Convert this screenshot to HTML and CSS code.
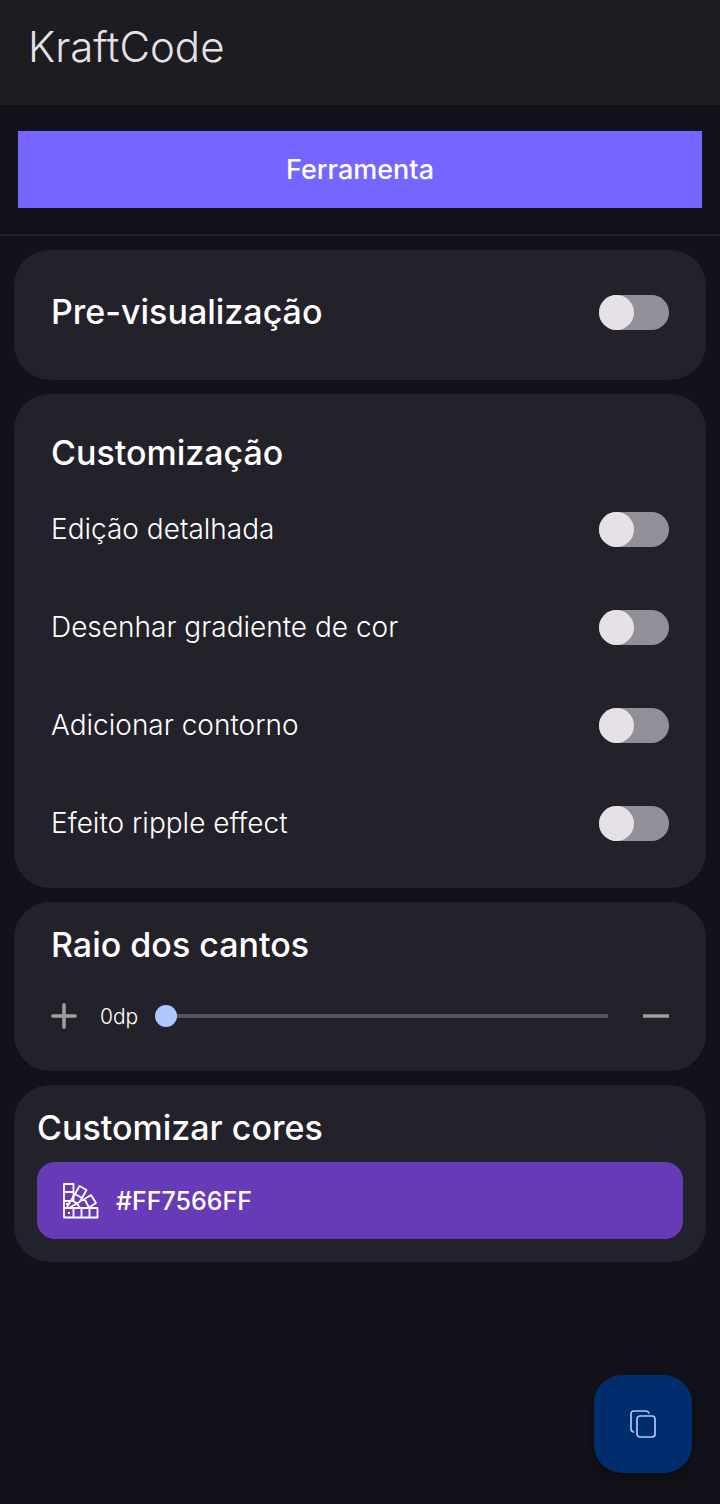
FILE: index.html
```html
<!DOCTYPE html>
<html lang="pt-BR">
<head>
<meta charset="utf-8">
<meta name="viewport" content="width=device-width, initial-scale=1">
<title>KraftCode</title>
<link rel="stylesheet" href="styles.css">
</head>
<body>
<header class="app-bar"><h1 class="app-title">KraftCode</h1></header>
<section class="preview"><button class="preview-button" type="button">Ferramenta</button></section>
<main class="cards">
  <section class="card card-preview">
    <label class="row heading" for="previsualizacao">Pre-visualização<input class="switch" id="previsualizacao" type="checkbox" role="switch"></label>
  </section>
  <section class="card card-options">
    <h2 class="heading">Customização</h2>
    <div class="options">
      <label class="row option" for="detalhada">Edição detalhada<input class="switch" id="detalhada" type="checkbox" role="switch"></label>
      <label class="row option" for="gradiente">Desenhar gradiente de cor<input class="switch" id="gradiente" type="checkbox" role="switch"></label>
      <label class="row option" for="contorno">Adicionar contorno<input class="switch" id="contorno" type="checkbox" role="switch"></label>
      <label class="row option" for="ripple">Efeito ripple effect<input class="switch" id="ripple" type="checkbox" role="switch"></label>
    </div>
  </section>
  <section class="card card-radius">
    <h2 class="heading" id="raio">Raio dos cantos</h2>
    <div class="slider-row">
      <button class="step" type="button" aria-label="Aumentar">
        <svg viewBox="0 0 26 26" width="26" height="26"><path d="M13 1.8V24.2M1.8 13H24.2" fill="none" stroke="#a09fa2" stroke-width="3.5" stroke-linecap="round"/></svg>
      </button>
      <output class="radius-value" for="raio-slider">0dp</output>
      <input class="slider" id="raio-slider" type="range" min="0" max="100" value="0" aria-labelledby="raio">
      <button class="step" type="button" aria-label="Diminuir">
        <svg viewBox="0 0 26 26" width="26" height="26"><path d="M0 13H26" fill="none" stroke="#a09fa2" stroke-width="3.5"/></svg>
      </button>
    </div>
  </section>
  <section class="card card-colors">
    <h2 class="heading">Customizar cores</h2>
    <button class="color-button" type="button">
      <svg viewBox="0 0 36 36" width="36" height="36" fill="none" stroke="#fff" stroke-width="1.8" stroke-linejoin="round">
        <path d="M1 25V1H10.5V18M1 9H10.5M1 18H10.5"/>
        <path d="M1 25H34.5V34.5H1ZM10.5 25V34.5M18.5 25V34.5M26.5 25V34.5"/>
        <path d="M16.5 3L23.5 7L19 15L12 11ZM12 11L4 24M19 15L17 18M8.5 17L14 20.5"/>
        <path d="M28 12L33 20L26 24.5L21.5 16ZM21.5 16L6 25M14 20.5L17 25M3 21H6"/>
        <path d="M5 30H7"/>
      </svg>
      <span>#FF7566FF</span>
    </button>
  </section>
</main>
<button class="fab" type="button" aria-label="Copiar">
  <svg viewBox="0 0 26 28" width="26" height="28" fill="none" stroke="#b0c6ff" stroke-width="1.7" stroke-linecap="round">
    <rect x="7" y="6" width="18" height="21" rx="3"/>
    <path d="M3.5 22C1.7 21.5 1 20.5 1 19V4Q1 1 4 1H15.5Q18.2 1 18.8 3"/>
  </svg>
</button>
</body>
</html>
```

FILE: styles.css
```css
* {
  box-sizing: border-box;
}

body {
  margin: 0;
  min-height: 100vh;
  background: #13121a;
  color: #fff;
  font-family: Inter, "Noto Sans", sans-serif;
}

h1,
h2 {
  margin: 0;
}

button {
  border: 0;
  color: inherit;
  font: inherit;
  cursor: pointer;
}

svg {
  display: block;
}

.app-bar {
  padding: 23px 28px 32px;
  border-bottom: 2px solid #222127;
  background: #1d1c20;
}

.app-title {
  color: #e5e1e6;
  font-size: 42px;
  font-weight: 300;
  line-height: 48px;
}

.preview {
  padding: 26px 18px;
  border-bottom: 2px solid #222129;
}

.preview-button {
  width: 100%;
  height: 77px;
  background: #7566ff;
  font-size: 27px;
  font-weight: 500;
}

.cards {
  display: flex;
  flex-direction: column;
  gap: 14px;
  padding: 14px;
}

.card {
  border-radius: 36px;
  background: #232129;
}

.heading {
  font-size: 34px;
  font-weight: 500;
  line-height: 40px;
}

.row {
  display: flex;
  align-items: center;
  justify-content: space-between;
}

.card-preview {
  padding: 42px 37px 48px;
}

.card-options {
  padding: 39px 37px 16px;
}

.options {
  padding-top: 7px;
}

.option {
  height: 98px;
  font-size: 28px;
  font-weight: 300;
}

.switch {
  appearance: none;
  flex: none;
  width: 70px;
  height: 35px;
  margin: 0;
  border-radius: 18px;
  background: #938f99;
  cursor: pointer;
}

.switch::before {
  content: "";
  display: block;
  width: 35px;
  height: 35px;
  border-radius: 50%;
  background: #e6e1e6;
}

.switch:checked::before {
  margin-left: auto;
}

.card-radius {
  padding: 23px 37px 30px;
}

.slider-row {
  display: flex;
  align-items: center;
  height: 50px;
  margin-top: 26px;
}

.step {
  padding: 0;
  background: none;
}

.radius-value {
  min-width: 40px;
  margin: 0 15px 0 23px;
  font-size: 21px;
  font-weight: 300;
}

.slider {
  appearance: none;
  flex: 1;
  min-width: 0;
  height: 22px;
  margin: 0 24px 0 0;
  background: linear-gradient(#55535b, #55535b) center / calc(100% - 22px) 4px no-repeat;
}

.slider::-webkit-slider-thumb {
  appearance: none;
  width: 22px;
  height: 22px;
  border-radius: 50%;
  background: #b0c6ff;
}

.card-colors {
  padding: 23px;
}

.color-button {
  display: flex;
  align-items: center;
  gap: 17px;
  width: 100%;
  height: 77px;
  margin-top: 14px;
  padding: 0 26px;
  border-radius: 18px;
  background: #673ab7;
  font-size: 25px;
  font-weight: 500;
}

.fab {
  position: fixed;
  right: 28px;
  bottom: 31px;
  display: grid;
  place-items: center;
  width: 98px;
  height: 98px;
  border-radius: 28px;
  background: #002d6e;
  box-shadow: 0 6px 14px #0006;
}
```
